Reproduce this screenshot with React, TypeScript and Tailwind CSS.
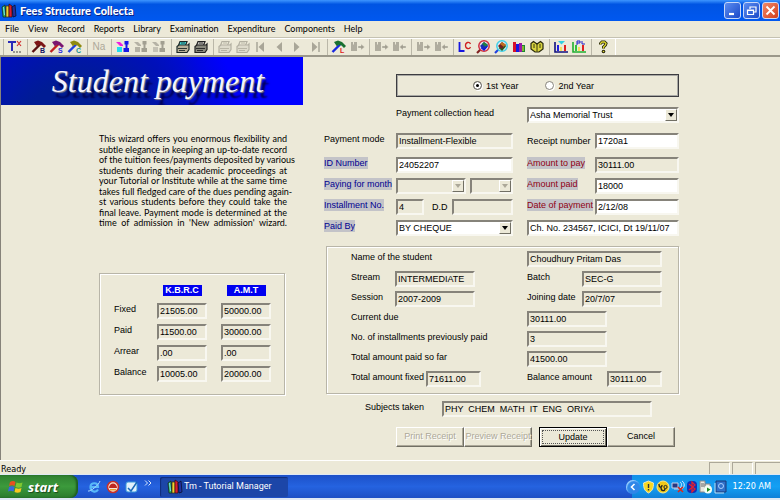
import React, { useState } from "react";

const UI = "font-['Liberation_Sans',Arial,sans-serif] text-[9px]";
const SUNKEN =
  "border-t-2 border-l-2 border-r-2 border-b-2 border-t-[#86837a] border-l-[#86837a] border-r-[#f8f7f0] border-b-[#f8f7f0]";

/* ---------- form parts ---------- */

function Field({ id, label, value, editable = false, className = "" }: {
  id: string; label?: string; value: string; editable?: boolean; className?: string;
}) {
  return (
    <input
      id={id}
      aria-label={label}
      type="text"
      defaultValue={value}
      readOnly={!editable}
      className={`${SUNKEN} ${editable ? "bg-white" : "bg-[#ece9d8]"} block h-4 min-w-0 px-px text-[9px] leading-3 text-black outline-none ${className}`}
    />
  );
}

function Combo({ id, label, options, disabled = false, className = "" }: {
  id: string; label?: string; options: string[]; disabled?: boolean; className?: string;
}) {
  return (
    <div className={`relative ${className}`}>
      <select
        id={id}
        aria-label={label}
        disabled={disabled}
        className={`${SUNKEN} ${disabled ? "bg-[#ece9d8]" : "bg-white"} block h-4 w-full appearance-none px-px text-[9px] leading-3 text-black opacity-100 outline-none`}
      >
        {options.map((o) => <option key={o}>{o}</option>)}
      </select>
      <span className="pointer-events-none absolute top-0.5 right-0.5 bottom-0.5 flex w-3 items-center justify-center border border-t-white border-l-white border-r-[#716f64] border-b-[#716f64] bg-[#ece9d8]">
        <svg width="6" height="4" viewBox="0 0 6 4"><path d="M0 0h6L3 4z" fill={disabled ? "#aca899" : "#000"} /></svg>
      </span>
    </div>
  );
}

function Label({ htmlFor, tone = "plain", className = "", children }: {
  htmlFor: string; tone?: "plain" | "blue" | "red"; className?: string; children: React.ReactNode;
}) {
  const tones = {
    plain: "text-black",
    blue: "bg-[#c3c3c8] text-[#000090]",
    red: "bg-[#c3c3c8] text-[#900010]",
  };
  return (
    <label htmlFor={htmlFor} className={`justify-self-start whitespace-nowrap leading-3 ${tones[tone]} ${className}`}>
      {children}
    </label>
  );
}

function DetailRow({ left, right }: { left: React.ReactNode; right: React.ReactNode }) {
  return (
    <div className="flex items-start">
      <div className="flex w-[176px] items-start">{left}</div>
      <div className="flex w-[135px] items-start">{right}</div>
    </div>
  );
}

/* ---------- toolbar icons ---------- */

const Svg = ({ children }: { children: React.ReactNode }) => (
  <svg width="16" height="14" viewBox="0 0 16 14">{children}</svg>
);

const IconExit = () => (
  <Svg>
    <path d="M1 1h8v2H6v8H4V3H1z" fill="#2a2ab8" />
    <path d="M10 1l4 5M14 1l-4 5" stroke="#d03030" strokeWidth="1.2" />
    <path d="M6 12h9" stroke="#444" strokeWidth="1" strokeDasharray="2 1" />
  </Svg>
);

const Hammer = ({ head, handle, letter, ink }: { head: string; handle: string; letter: string; ink: string }) => (
  <Svg>
    <path d="M1.5 12L9 4.5" stroke={handle} strokeWidth="2.4" />
    <path d="M3 2l4-1.500 4 1.500 4 4-2 2-2.500-2.500-3-.8-1.500 1.800z" fill={head} />
    <text x="9" y="13" fontSize="7" fontWeight="700" fontFamily="Liberation Sans" fill={ink}>{letter}</text>
  </Svg>
);

const People = ({ a, b, c }: { a: string; b: string; c: string }) => (
  <Svg>
    <path d="M1 2h4l3 3v1H5z" fill={a} />
    <path d="M2 7h5v5H2z" fill={b} />
    <path d="M9.500 1h4v3.500h-1V8H14v4H8.500V8h2V4.500h-1z" fill={c} />
  </Svg>
);

const Printer = ({ ink, paper, body }: { ink: string; paper: string; body: string }) => (
  <Svg>
    <path d="M5 1.500h7l-1.500 4H3.500z" fill={paper} stroke={ink} strokeWidth="1.200" />
    <path d="M2 6.500L4 5h9l1-1v5.500L12 12.500H2z" fill={body} stroke={ink} strokeWidth="1.200" />
    <path d="M6 3h4M3 8.500h9M4 10.500h6" stroke={ink} strokeWidth=".9" />
  </Svg>
);

const Nav = ({ dir, bar = false }: { dir: "l" | "r"; bar?: boolean }) => (
  <Svg>
    <path d={dir === "l" ? "M11 2v10L5.500 7z" : "M5 2v10l5.500-5z"} fill="#a9a698" />
    {bar && <path d={dir === "l" ? "M4 2v10" : "M12 2v10"} stroke="#a9a698" strokeWidth="1.500" />}
  </Svg>
);

const Transfer = ({ dir }: { dir: "l" | "r" }) => (
  <Svg>
    <path d="M2 2h2v2l1 1V2h3v9H2z" fill="#b0ad9f" />
    <path
      d={dir === "r" ? "M9 6h3V4l3.500 3L12 10V8H9z" : "M15 6h-3V4L8.500 7 12 10V8h3z"}
      fill="#a29f91"
      stroke="#ece9d8"
      strokeWidth=".4"
    />
  </Svg>
);

const IconLC = () => (
  <Svg>
    <path d="M2.500 2v9h5" fill="none" stroke="#1515e0" strokeWidth="1.800" />
    <path d="M13.500 4c-1-2.500-5-2-5 1.500s4 4 5 1.500" fill="none" stroke="#d02020" strokeWidth="1.300" />
  </Svg>
);

const Lens = ({ ring, handle, a, b, c }: { ring: string; handle: string; a: string; b: string; c: string }) => (
  <Svg>
    <path d="M2 13l4-4" stroke={handle} strokeWidth="2.200" />
    <circle cx="9" cy="6" r="5.200" fill="#e8e8f0" stroke={ring} strokeWidth="1.500" />
    <path d="M5 6l4-4 4 3-4 5z" fill={a} />
    <path d="M7 4l2-2 4 3-2 2z" fill={b} />
    <path d="M6 7.500l3 2.500 3.500-4" fill="none" stroke={c} strokeWidth="1.300" />
  </Svg>
);

const Books = () => (
  <Svg>
    <path d="M2 2h3v10H2z" fill="#d8102a" />
    <path d="M5 4h3v8H5z" fill="#1518e0" />
    <path d="M8 3h3v9H8z" fill="#9b16a6" />
    <path d="M11 5h3v7h-3z" fill="#188a30" />
    <path d="M12 6v5" stroke="#f0e030" />
  </Svg>
);

const OpenBook = () => (
  <Svg>
    <path d="M2 3.500l2.500-2L8 4l3.500-2.500 2.500 2V9l-4 3H6L2 9z" fill="#d8d440" stroke="#28280c" strokeWidth="1.200" />
    <path d="M8 4v7.500M11 4v4M5 4v4" stroke="#28280c" strokeWidth=".9" />
  </Svg>
);

const Chart = ({ pl = false }: { pl?: boolean }) => (
  <Svg>
    <path d="M2 2v10h13" fill="none" stroke={pl ? "#20b030" : "#101080"} strokeWidth="1.600" />
    <path d="M4 5h2v6H4z" fill={pl ? "#30c040" : "#2020e0"} />
    <path d="M7 7h2v4H7z" fill="#f0e060" />
    <path d="M11 5h2v6h-2z" fill="#e02020" />
    {pl ? (
      <path d="M6 5V1h3v2H6M11 1v3h3" fill="none" stroke="#2020d0" strokeWidth="1" />
    ) : (
      <path d="M5 1h7L8.500 4.500z" fill="#30d0e0" />
    )}
  </Svg>
);

const Question = () => (
  <Svg>
    <path d="M5.500 4.500V3.500l1.500-1.500h2.500l1.500 1.500-.5 1.500L8.500 7v1.500" fill="none" stroke="#222208" strokeWidth="3" />
    <path d="M5.500 4.500V3.500l1.500-1.500h2.500l1.500 1.500-.5 1.500L8.500 7v1.500" fill="none" stroke="#e0d830" strokeWidth="1.300" />
    <circle cx="8.500" cy="11.500" r="1.800" fill="#222208" />
    <circle cx="8.500" cy="11.500" r=".8" fill="#e0d830" />
  </Svg>
);

const toolGroups: { name: string; icon: React.ReactNode; off?: boolean }[][] = [
  [{ name: "Exit", icon: <IconExit /> }],
  [
    { name: "Build B", icon: <Hammer head="#7c1414" handle="#5a1010" letter="B" ink="#101060" /> },
    { name: "Build S", icon: <Hammer head="#7a1670" handle="#c02020" letter="S" ink="#2828e0" /> },
    { name: "Build C", icon: <Hammer head="#8f8a10" handle="#2040e0" letter="C" ink="#109090" /> },
  ],
  [{ name: "Name", icon: <span className="font-['Liberation_Sans',sans-serif] text-[10px] leading-3 text-[#aca899]">Na</span>, off: true }],
  [
    { name: "Students", icon: <People a="#f020e0" b="#20e0f0" c="#1818e8" /> },
    { name: "Students 2", icon: <People a="#b5b2a5" b="#b5b2a5" c="#a29f91" />, off: true },
    { name: "Students 3", icon: <People a="#b5b2a5" b="#c5c2b5" c="#a29f91" />, off: true },
  ],
  [
    { name: "Print preview", icon: <Printer ink="#1c2828" paper="#40e0e0" body="#b8b098" /> },
    { name: "Print", icon: <Printer ink="#222" paper="#c8c6c0" body="#88887c" /> },
  ],
  [
    { name: "Print list", icon: <Printer ink="#b3b0a2" paper="#ece9d8" body="#dedbcc" />, off: true },
    { name: "Print form", icon: <Printer ink="#b3b0a2" paper="#ece9d8" body="#dedbcc" />, off: true },
    { name: "First", icon: <Nav dir="l" bar />, off: true },
    { name: "Previous", icon: <Nav dir="l" />, off: true },
    { name: "Next", icon: <Nav dir="r" />, off: true },
    { name: "Last", icon: <Nav dir="r" bar />, off: true },
  ],
  [
    { name: "Build L", icon: <Hammer head="#187030" handle="#1828e0" letter="L" ink="#e01818" /> },
    { name: "Issue", icon: <Transfer dir="r" />, off: true },
  ],
  [{ name: "Send", icon: <Transfer dir="r" />, off: true }, { name: "Receive", icon: <Transfer dir="l" />, off: true }],
  [{ name: "Lend", icon: <Transfer dir="r" />, off: true }, { name: "Return", icon: <Transfer dir="l" />, off: true }],
  [
    { name: "Library card", icon: <IconLC /> },
    { name: "Find book", icon: <Lens ring="#d03040" handle="#802020" a="#1a30b0" b="#208040" c="#1010e0" /> },
    { name: "Find title", icon: <Lens ring="#40d0e8" handle="#2040e0" a="#702020" b="#c07020" c="#206020" /> },
    { name: "Books", icon: <Books /> },
    { name: "Catalogue", icon: <OpenBook /> },
  ],
  [{ name: "Chart", icon: <Chart /> }, { name: "Profit and loss", icon: <Chart pl /> }],
  [{ name: "Help", icon: <Question /> }],
];

const BooksLogo = () => (
  <svg width="16" height="15" viewBox="0 0 16 15">
    <path d="M1 4l3-2 1 12H2z" fill="#30b060" stroke="#102018" strokeWidth=".7" />
    <path d="M5 3l3 0v11H5z" fill="#f0d030" stroke="#302808" strokeWidth=".7" />
    <path d="M8 1l3 2v11H8z" fill="#d82030" stroke="#300810" strokeWidth=".7" />
    <path d="M11 4l3-2 1 11-3 1z" fill="#2030a0" stroke="#080820" strokeWidth=".7" />
    <path d="M2.500 4l1 8" stroke="#70e0f0" strokeWidth="1" />
  </svg>
);

/* ---------- window chrome ---------- */

const menus = ["File", "View", "Record", "Reports", "Library", "Examination", "Expenditure", "Components", "Help"];

function TitleBar() {
  const btn = "flex h-[17px] w-[17px] items-center justify-center rounded-[3px] border border-[#c8d8f8]";
  return (
    <header className="flex h-[21px] items-center bg-linear-to-b from-[#3d95ff] from-0% via-[#0054e3] via-20% to-[#0058f0] pr-px pl-px">
      <BooksLogo />
      <h1 className="ml-[3px] flex-1 font-['Lato',sans-serif] text-[11px] leading-4 font-black text-white [text-shadow:1px_1px_0_#0a1f80]">
        Fees Structure Collecta
      </h1>
      <div className="flex gap-0.5">
        <button aria-label="Minimize" className={`${btn} bg-linear-to-br from-[#5c8cf0] to-[#1c48c8]`}>
          <svg width="11" height="11" viewBox="0 0 11 11"><path d="M2 9h5" stroke="#fff" strokeWidth="2.200" /></svg>
        </button>
        <button aria-label="Restore" className={`${btn} bg-linear-to-br from-[#5c8cf0] to-[#1c48c8]`}>
          <svg width="11" height="11" viewBox="0 0 11 11" fill="none" stroke="#fff"><path d="M4 4V2h6v5H8M1.500 5h6v4.500h-6zM1.500 5.500h6" strokeWidth="1.200" /></svg>
        </button>
        <button aria-label="Close" className={`${btn} bg-linear-to-br from-[#f08868] to-[#d03c14]`}>
          <svg width="11" height="11" viewBox="0 0 11 11"><path d="M1.500 1.500l8 8M9.500 1.500l-8 8" stroke="#fff" strokeWidth="1.800" /></svg>
        </button>
      </div>
    </header>
  );
}

function ToolBar() {
  return (
    <div role="toolbar" className="flex h-5 items-center border-t border-b-2 border-t-[#c5c2b2] border-b-[#9b988a] pl-[3px] shadow-[inset_0_1px_0_#fff]">
      {toolGroups.map((g, i) => (
        <div key={i} className="flex h-4 items-center border-l border-l-[#bab7a8] pr-[3px] pl-0.5 last:border-r last:border-r-white">
          {g.map((t) => (
            <button key={t.name} aria-label={t.name} disabled={t.off} className="flex w-[18px] items-center justify-center">
              {t.icon}
            </button>
          ))}
        </div>
      ))}
    </div>
  );
}

/* ---------- left column ---------- */

const wizardLines = [
  "This wizard offers you enormous flexibility and",
  "subtle elegance in keeping an up-to-date record",
  "of the tuition fees/payments deposited by various",
  "students during their academic proceedings at",
  "your Tutorial or Institute while at the same time",
  "takes full fledged care of the dues pending again-",
  "st various students before they could take the",
  "final leave. Payment mode is determined at the",
  "time of admission in 'New admission' wizard.",
];

const totals = [
  ["Fixed", "21505.00", "50000.00"],
  ["Paid", "11500.00", "30000.00"],
  ["Arrear", ".00", ".00"],
  ["Balance", "10005.00", "20000.00"],
];

function Banner() {
  return (
    <div className="flex h-12 items-center justify-center overflow-hidden bg-[radial-gradient(circle_at_25%_180%,#001c94_0%,#001c94_25%,#0010b8_45%,transparent_70%),linear-gradient(to_right,#0020a8_0%,#0018c8_35%,#0000ff_65%)] pl-3">
      <h2 className="font-['Liberation_Serif',serif] text-[32px] leading-10 whitespace-nowrap text-[#f4f4ff] italic [text-shadow:1px_1px_1px_#888,4px_6px_2px_#000050]">
        Student payment
      </h2>
    </div>
  );
}

function LeftColumn() {
  return (
    <section className="w-[302px] flex-none">
      <Banner />
      <p className="mt-[29px] ml-[98px] flex h-[94px] w-[188px] flex-col justify-between font-['Lato','Liberation_Sans',sans-serif]">
        {wizardLines.map((l) => (
          <span key={l} className="block leading-[10px] whitespace-nowrap [text-align-last:justify]">{l}</span>
        ))}
      </p>
      <div className="mt-[45px] ml-[98px] h-[122px] w-[186px] border border-[#b8b5a8] pl-3.5 shadow-[inset_1px_1px_0_#fff,1px_1px_0_#fff]">
        <table className="mt-1 w-[157px] table-fixed border-collapse text-left">
          <thead>
            <tr className="h-[25px]">
              <td className="w-[43px]" />
              {["K.B.R.C", "A.M.T"].map((h, i) => (
                <th key={h} className={`p-0 ${i === 0 ? "w-16 pr-3.5" : "w-[50px]"}`}>
                  <span className="mx-auto block w-[39px] bg-[#0000f0] text-center text-[9px] leading-[11px] font-bold text-white">{h}</span>
                </th>
              ))}
            </tr>
          </thead>
          <tbody>
            {totals.map(([name, a, b]) => (
              <tr key={name} className="h-[21px] align-top">
                <th scope="row" className="p-0 leading-3 font-normal">{name}</th>
                <td className="p-0 pr-3.5"><Field id={`k-${name}`} label={`${name} K.B.R.C`} value={a} className="w-full" /></td>
                <td className="p-0"><Field id={`a-${name}`} label={`${name} A.M.T`} value={b} className="w-full" /></td>
              </tr>
            ))}
          </tbody>
        </table>
      </div>
    </section>
  );
}

/* ---------- payment form ---------- */

function Radio({ label, checked, onChange }: { label: string; checked: boolean; onChange: () => void }) {
  return (
    <label className="flex items-center gap-1 leading-3">
      <input
        type="radio"
        name="year"
        checked={checked}
        onChange={onChange}
        className="h-[9px] w-[9px] appearance-none rounded-full border border-[#86837a] bg-white shadow-[inset_0_0_0_2px_#fff,1px_1px_0_#fff] checked:bg-black"
      />
      {label}
    </label>
  );
}

function PaymentForm() {
  const [year, setYear] = useState(1);
  const btn = "h-5 w-[68px] whitespace-nowrap border border-t-white border-l-white border-r-[#716f64] border-b-[#716f64] shadow-[inset_-1px_-1px_0_#aca899] disabled:text-[#aca899] disabled:[text-shadow:1px_1px_0_#fff]";
  return (
    <form className="mt-[17px] ml-[21px] w-[355px] flex-none" onSubmit={(e) => e.preventDefault()}>
      <fieldset className="ml-[72px] flex h-[23px] items-center justify-center gap-[27px] border border-[#3c3c40] pr-2 shadow-[inset_1px_1px_0_#a8a8a4,inset_-1px_-1px_0_#a8a8a4]">
        <Radio label="1st Year" checked={year === 1} onChange={() => setYear(1)} />
        <Radio label="2nd Year" checked={year === 2} onChange={() => setYear(2)} />
      </fieldset>

      <div className="mt-2.5 ml-[72px] flex items-start">
        <Label htmlFor="head" className="w-[131px]">Payment collection head</Label>
        <Combo id="head" options={["Asha Memorial Trust"]} className="flex-1" />
      </div>

      <div className="mt-2.5 grid grid-cols-[72px_131px_68px_84px] items-start">
        <Label htmlFor="mode">Payment mode</Label>
        <Field id="mode" value="Installment-Flexible" className="w-[117px]" />
        <Label htmlFor="receipt" className="pt-0.5">Receipt number</Label>
        <Field id="receipt" value="1720a1" editable className="w-full" />
      </div>
      <div className="mt-2 grid grid-cols-[72px_131px_68px_84px] items-start gap-y-[5px]">
        <Label htmlFor="sid" tone="blue">ID Number</Label>
        <Field id="sid" value="24052207" editable className="w-[117px]" />
        <Label htmlFor="due" tone="red">Amount to pay</Label>
        <Field id="due" value="30111.00" className="w-full" />

        <Label htmlFor="month" tone="blue">Paying for month</Label>
        <div className="flex w-[117px] gap-1">
          <Combo id="month" options={[""]} disabled className="w-[70px]" />
          <Combo id="month-year" label="Year" options={[""]} disabled className="flex-1" />
        </div>
        <Label htmlFor="amount" tone="red">Amount paid</Label>
        <Field id="amount" value="18000" editable className="w-full" />

        <Label htmlFor="inst" tone="blue">Installment No.</Label>
        <div className="flex w-[117px]">
          <Field id="inst" value="4" className="w-7" />
          <Label htmlFor="dd" className="w-7 pt-0.5 pl-2">D.D</Label>
          <Field id="dd" value="" className="flex-1" />
        </div>
        <Label htmlFor="date" tone="red">Date of payment</Label>
        <Field id="date" value="2/12/08" editable className="w-full" />

        <Label htmlFor="by" tone="blue">Paid By</Label>
        <Combo id="by" options={["BY CHEQUE"]} className="w-[117px]" />
        <Field id="cheque" label="Cheque details" value="Ch. No. 234567, ICICI, Dt 19/11/07" editable className="col-span-2 w-full" />
      </div>

      <div className="mt-2.5 ml-0.5 flex h-[148px] flex-col gap-1 border border-[#b8b5a8] pt-1 pl-6 shadow-[inset_1px_1px_0_#fff,1px_1px_0_#fff]">
        <DetailRow
          left={<Label htmlFor="name">Name of the student</Label>}
          right={<Field id="name" value="Choudhury Pritam Das" className="w-full" />}
        />
        <DetailRow
          left={<><Label htmlFor="stream" className="w-11">Stream</Label><Field id="stream" value="INTERMEDIATE" className="w-20" /></>}
          right={<><Label htmlFor="batch" className="w-[55px]">Batch</Label><Field id="batch" value="SEC-G" className="w-20" /></>}
        />
        <DetailRow
          left={<><Label htmlFor="session" className="w-11">Session</Label><Field id="session" value="2007-2009" className="w-20" /></>}
          right={<><Label htmlFor="joined" className="w-[55px]">Joining date</Label><Field id="joined" value="20/7/07" className="w-20" /></>}
        />
        <DetailRow
          left={<Label htmlFor="current">Current due</Label>}
          right={<Field id="current" value="30111.00" className="w-20" />}
        />
        <DetailRow
          left={<Label htmlFor="count">No. of installments previously paid</Label>}
          right={<Field id="count" value="3" className="w-20" />}
        />
        <DetailRow
          left={<Label htmlFor="paid">Total amount paid so far</Label>}
          right={<Field id="paid" value="41500.00" className="w-20" />}
        />
        <DetailRow
          left={<><Label htmlFor="fixed" className="w-[75px]">Total amount fixed</Label><Field id="fixed" value="71611.00" className="w-[55px]" /></>}
          right={<><Label htmlFor="balance" className="w-20">Balance amount</Label><Field id="balance" value="30111.00" className="w-[55px]" /></>}
        />
      </div>

      <div className="mt-[7px] flex items-start pl-[41px]">
        <Label htmlFor="subjects" className="w-[77px]">Subjects taken</Label>
        <Field id="subjects" value="PHY  CHEM  MATH  IT  ENG  ORIYA" className="w-[210px]" />
      </div>

      <div className="mt-2.5 flex pl-[72px]">
        <button type="button" disabled className={btn}>Print Receipt</button>
        <button type="button" disabled className={btn}>Preview Receipt</button>
        <button type="submit" className="ml-[7px] h-5 w-[68px] border border-black p-0.5 shadow-[inset_1px_1px_0_#fff,inset_-1px_-1px_0_#716f64]">
          <span className="block border border-dotted border-[#555] leading-3">Update</span>
        </button>
        <button type="button" className={btn}>Cancel</button>
      </div>
    </form>
  );
}

/* ---------- task bar ---------- */

const trayIcons = [
  <svg key="shield" width="13" height="14" viewBox="0 0 13 14"><path d="M6.500 1l5 2c0 5-1 8-5 10-4-2-5-5-5-10z" fill="#f8d820" stroke="#e8e8c0" /><path d="M6.500 4v4M6.500 9v1.500" stroke="#333" strokeWidth="1.400" /></svg>,
  <svg key="scan" width="14" height="14" viewBox="0 0 14 14"><circle cx="7" cy="7" r="6" fill="#f0c818" stroke="#fae888" /><path d="M3 4c0 4 3 4 3 1M5 7.500c0 4 4 4 4 1" fill="none" stroke="#222" strokeWidth="1.300" /><circle cx="9.500" cy="7" r="1.600" fill="none" stroke="#222" /></svg>,
  <svg key="net" width="14" height="14" viewBox="0 0 14 14"><path d="M1 3h6v5H1zM3 9h6" fill="#283880" stroke="#c8d0e8" /><path d="M9 2c2 1 2 4 0 6M11 1c3 2 3 6 0 8" fill="none" stroke="#d8e8ff" /><path d="M7 7l5 5M12 7l-5 5" stroke="#e02818" strokeWidth="1.600" /></svg>,
  <svg key="bt" width="12" height="14" viewBox="0 0 12 14"><rect x="1" y="1" width="10" height="12" rx="4" fill="#1030b8" /><path d="M3 4l6 5-3 3V2l3 3-6 5" fill="none" stroke="#e02030" strokeWidth="1.300" /></svg>,
  <svg key="srv" width="14" height="14" viewBox="0 0 14 14"><path d="M1 1h5v11H1zM6 4h5v6H6z" fill="#e8e8e0" stroke="#888" /><path d="M2 4h3M2 6h3" stroke="#666" /><circle cx="9" cy="9.500" r="4" fill="#f4fff4" /><path d="M8 7.500l3.500 2L8 12z" fill="#208820" /></svg>,
  <svg key="disp" width="14" height="14" viewBox="0 0 14 14"><path d="M2 1h10v11H2z" fill="#3070c8" stroke="#183878" /><path d="M1 3v10h9" fill="none" stroke="#b8d8f0" /><circle cx="7" cy="6" r="2.500" fill="none" stroke="#a8d0ff" /></svg>,
];

function TaskBar() {
  return (
    <footer className="border-t border-b-2 border-[#dfe8f4]">
      <nav className="flex h-[23px] items-center bg-linear-to-b from-[#1c50c8] via-[#2563e0] to-[#1d4fc4]">
        <button className="flex h-full w-[78px] items-center gap-1 rounded-r-lg bg-linear-to-b from-[#2f8030] via-[#3c9a3c] to-[#2a7a2c] pl-2 shadow-[inset_-2px_0_2px_#1d5c20]">
          <svg width="16" height="15" viewBox="0 0 16 15">
            <path d="M2 3c2-1.500 4-1.500 5.500 0L6.500 7C5 6 3 6 1 7z" fill="#e85020" />
            <path d="M8.500 3.500c2 1 4 1 6 0l-1 4.500c-2 1-4 1-6 0z" fill="#80c830" />
            <path d="M1 8c2-1 3.500-1 5.500 0l-1 4.500c-2-1.300-3.500-1-5.500 0z" fill="#3868e0" />
            <path d="M7.500 9c2 1 4 1 6 0l-1 4c-2 1-4 1-6 0z" fill="#f8c820" />
          </svg>
          <span className="font-['Open_Sans','Noto_Sans',sans-serif] text-[13px] leading-5 font-bold text-white italic [text-shadow:1px_1px_1px_#184818]">start</span>
        </button>
        <div className="ml-[9px] flex w-[73px] items-center gap-[5px]">
          <button aria-label="Internet Explorer">
            <svg width="14" height="14" viewBox="0 0 14 14"><path d="M11 9.500c-2 3.500-7.500 2.500-7.500-2.500s7.500-5 7.500 0H4" fill="none" stroke="#58b8f8" strokeWidth="2.200" /><path d="M1 11c2 1 11-6 12-10" fill="none" stroke="#a8d8ff" /></svg>
          </button>
          <button aria-label="Browser">
            <svg width="14" height="14" viewBox="0 0 14 14"><circle cx="7" cy="7" r="5.500" fill="#f8e8d8" stroke="#c83028" strokeWidth="1.600" /><path d="M3 8c0-6 8-6 8 0z" fill="#c02820" /><path d="M4 9h6v1.500H4z" fill="#e8a030" /></svg>
          </button>
          <button aria-label="Show desktop">
            <svg width="14" height="14" viewBox="0 0 14 14"><rect x="1" y="2" width="11" height="10" rx="2" fill="#e0f0fc" stroke="#3898d8" /><path d="M3 8l3 3 6-9" fill="none" stroke="#1868b8" strokeWidth="1.500" /></svg>
          </button>
          <button aria-label="More" className="pb-2">
            <svg width="8" height="6" viewBox="0 0 8 6" fill="none" stroke="#d8e8ff"><path d="M1 .5L3.500 3 1 5.500M4.500.5L7 3 4.500 5.500" /></svg>
          </button>
        </div>
        <button className="flex h-5 w-[128px] items-center gap-px rounded-[2px] bg-[#1c46a8] pl-[7px] font-['Roboto',sans-serif] whitespace-nowrap text-white shadow-[inset_1px_1px_1px_#102c78]">
          <BooksLogo />
          Tm - Tutorial Manager
        </button>
        <div className="ml-auto flex h-full items-center bg-linear-to-b from-[#1390e8] via-[#14a0f4] to-[#1080d8] pr-[9px] text-white">
          <button aria-label="Show hidden icons" className="-ml-1.5 flex h-3.5 w-3.5 items-center justify-center rounded-full bg-[#2f86e8] shadow-[inset_1px_1px_1px_#9cd0ff]">
            <svg width="6" height="8" viewBox="0 0 6 8"><path d="M4.500 1L1.500 4l3 3" fill="none" stroke="#fff" strokeWidth="1.600" /></svg>
          </button>
          <div className="ml-0.5 flex items-center gap-px">{trayIcons}</div>
          <time className="ml-[5px]">12:20 AM</time>
        </div>
      </nav>
    </footer>
  );
}

export default function App() {
  const tahoma = "font-['DejaVu_Sans_Condensed','DejaVu_Sans',sans-serif] text-[9px]";
  return (
    <div className="flex min-h-screen w-full flex-col bg-[#ece9d8] text-black">
      <TitleBar />
      <nav className="flex h-4 items-center gap-[9px] pl-[5px] font-['Lato',sans-serif] text-[9px]">
        {menus.map((m) => <button key={m} className="leading-3">{m}</button>)}
      </nav>
      <ToolBar />
      <main className={`flex flex-1 items-start border-l border-l-[#86837a] ${UI}`}>
        <LeftColumn />
        <PaymentForm />
      </main>
      <div className={`flex h-3.5 items-stretch border-t border-t-white ${tahoma}`}>
        <span className="flex-1 self-center pt-0.5 pl-px leading-3">Ready</span>
        <div className="flex gap-0.5 pt-px">
          <span className="w-[21px] border border-t-[#aca899] border-r-white border-b-0 border-l-[#aca899]" />
          <span className="w-[21px] border border-t-[#aca899] border-r-white border-b-0 border-l-[#aca899]" />
          <span className="w-[25px] border border-r-0 border-b-0 border-t-[#aca899] border-l-[#aca899]" />
        </div>
      </div>
      <div className={tahoma}><TaskBar /></div>
    </div>
  );
}
